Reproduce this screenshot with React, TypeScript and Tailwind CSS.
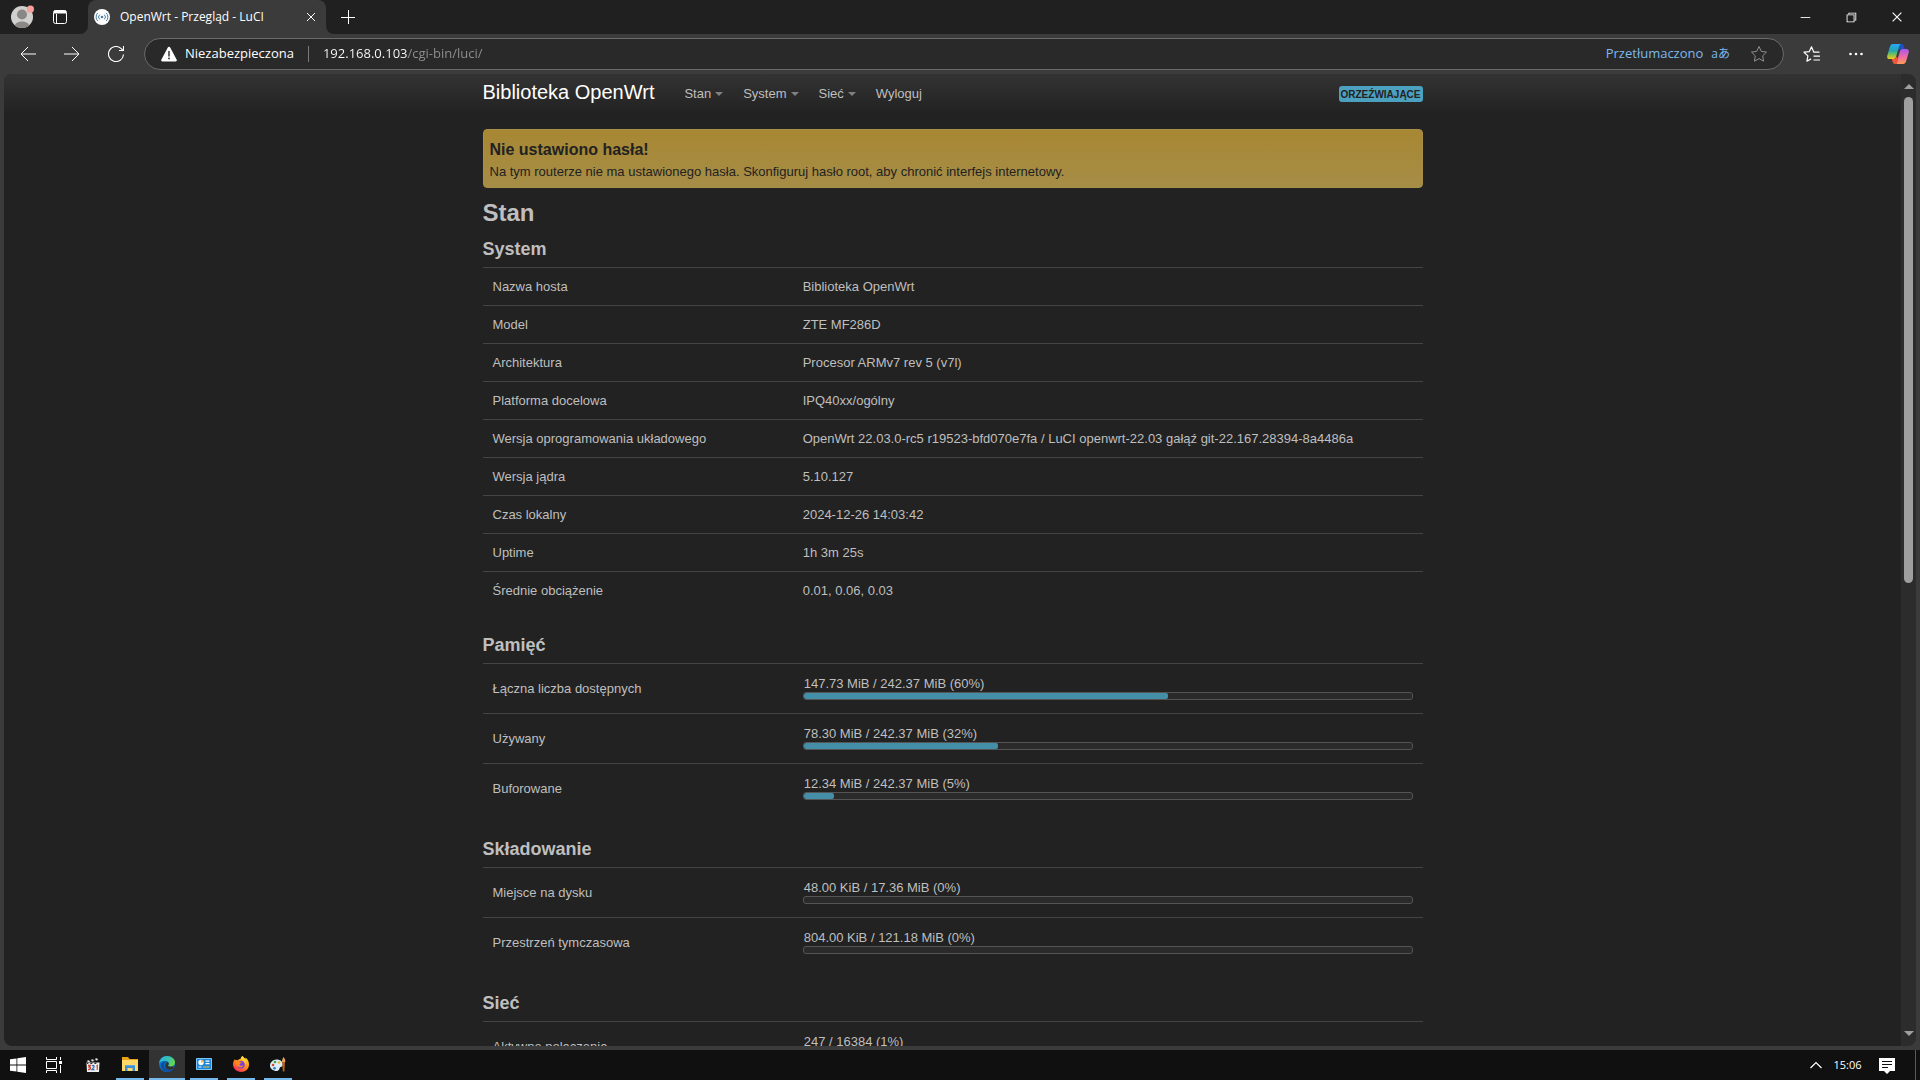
import { type ReactNode } from 'react';
import {
  VscChromeClose,
  VscChromeMinimize,
  VscChromeRestore,
} from 'react-icons/vsc';

type Row = { label: string; value: string };
type UsageRow = Row & { percent: number };

const systemRows: Row[] = [
  { label: 'Nazwa hosta', value: 'Biblioteka OpenWrt' },
  { label: 'Model', value: 'ZTE MF286D' },
  { label: 'Architektura', value: 'Procesor ARMv7 rev 5 (v7l)' },
  { label: 'Platforma docelowa', value: 'IPQ40xx/ogólny' },
  {
    label: 'Wersja oprogramowania układowego',
    value: 'OpenWrt 22.03.0-rc5 r19523-bfd070e7fa / LuCI openwrt-22.03 gałąź git-22.167.28394-8a4486a',
  },
  { label: 'Wersja jądra', value: '5.10.127' },
  { label: 'Czas lokalny', value: '2024-12-26 14:03:42' },
  { label: 'Uptime', value: '1h 3m 25s' },
  { label: 'Średnie obciążenie', value: '0.01, 0.06, 0.03' },
];

const memoryRows: UsageRow[] = [
  { label: 'Łączna liczba dostępnych', value: '147.73 MiB / 242.37 MiB (60%)', percent: 60 },
  { label: 'Używany', value: '78.30 MiB / 242.37 MiB (32%)', percent: 32 },
  { label: 'Buforowane', value: '12.34 MiB / 242.37 MiB (5%)', percent: 5 },
];

const storageRows: UsageRow[] = [
  { label: 'Miejsce na dysku', value: '48.00 KiB / 17.36 MiB (0%)', percent: 0 },
  { label: 'Przestrzeń tymczasowa', value: '804.00 KiB / 121.18 MiB (0%)', percent: 0 },
];

const networkRows: UsageRow[] = [
  { label: 'Aktywne połączenia', value: '247 / 16384 (1%)', percent: 1 },
];

const menu = [
  { label: 'Stan', dropdown: true },
  { label: 'System', dropdown: true },
  { label: 'Sieć', dropdown: true },
  { label: 'Wyloguj', dropdown: false },
];

/* ---------- Browser icons ---------- */

function AvatarIcon() {
  return (
    <svg className="h-6 w-6" viewBox="0 0 24 24">
      <clipPath id="avatar">
        <circle cx="12" cy="12" r="11" />
      </clipPath>
      <circle cx="12" cy="12" r="11" fill="#d2d0ce" />
      <g clipPath="url(#avatar)" fill="#8a8886">
        <circle cx="12" cy="9.500" r="5" />
        <path d="M4 24c0-5 3-7.500 8-7.500s8 2.500 8 7.500z" />
      </g>
      <circle cx="20.400" cy="4.200" r="3.600" fill="#f8a09a" />
    </svg>
  );
}

function WorkspaceIcon() {
  return (
    <svg className="h-4 w-4" viewBox="0 0 16 16" fill="none" stroke="#fff">
      <rect x="1.500" y="1.500" width="13" height="13" rx="2" />
      <path d="M2 3h12" strokeWidth="3" />
      <path d="M4.500 5v9" />
    </svg>
  );
}

function LuciFavicon() {
  return (
    <svg className="h-4 w-4" viewBox="0 0 16 16" fill="none" stroke="#4b7f9c">
      <circle cx="8" cy="8" r="8" fill="#fff" stroke="none" />
      <circle cx="8" cy="8" r="1.300" fill="#4b7f9c" stroke="none" />
      <path d="M5.700 5.600a3.300 3.300 0 0 0 0 4.800M10.300 5.600a3.300 3.300 0 0 1 0 4.800" />
      <path d="M3.800 3.900a5.800 5.800 0 0 0 0 8.200M12.200 3.900a5.800 5.800 0 0 1 0 8.200" />
    </svg>
  );
}

function BackIcon() {
  return (
    <svg className="h-4 w-4" viewBox="0 0 16 16" fill="none" stroke="currentColor">
      <path d="M16 8H1M8 1L1 8l7 7" />
    </svg>
  );
}

function ForwardIcon() {
  return (
    <svg className="h-4 w-4" viewBox="0 0 16 16" fill="none" stroke="currentColor">
      <path d="M0 8h15M8 1l7 7-7 7" />
    </svg>
  );
}

function ReloadIcon() {
  return (
    <svg className="h-4 w-4" viewBox="0 0 16 16" fill="none" stroke="currentColor" strokeWidth="1.100">
      <path d="M15.500 8.500A7.500 7.500 0 1 1 13.300 2.700L15 4.500" />
      <path d="M15.500 0v4.500H11" />
    </svg>
  );
}

function WarningIcon() {
  return (
    <svg className="h-4 w-4 shrink-0" viewBox="0 0 16 16">
      <path d="M8 .8c.5 0 .9.2 1.200.7l6.500 12.200c.5.900-.1 1.800-1.100 1.800H1.400c-1 0-1.600-.9-1.100-1.800L6.800 1.500C7.100 1 7.500.8 8 .8z" fill="#fff" />
      <path d="M8 5.500v4.500" stroke="#292929" strokeWidth="1.400" strokeLinecap="round" />
      <circle cx="8" cy="12.400" r=".9" fill="#292929" />
    </svg>
  );
}

function StarIcon() {
  return (
    <svg className="h-[18px] w-[18px]" viewBox="0 0 18 18" fill="none" stroke="#8e8e8e" strokeLinejoin="round">
      <path d="M9 1.500l2.300 4.900 5.200.7-3.800 3.700.9 5.400L9 13.600l-4.600 2.600.9-5.400L1.500 7.100l5.200-.7z" />
    </svg>
  );
}

function FavoritesIcon() {
  return (
    <svg className="h-[18px] w-[18px]" viewBox="0 0 18 18" fill="none" stroke="#fff" strokeLinejoin="round" strokeWidth="1.200">
      <path d="M16.500 7.200H10.800L8.500 1.800 6.300 6.600l-5.300.6 3.900 3.700-1 5.300 4.200-2.300" />
      <path d="M10.500 11.200H17M10.500 15H17" />
    </svg>
  );
}

function CopilotIcon() {
  return (
    <svg className="h-[22px] w-[22px]" viewBox="0 0 22 22">
      <defs>
        <linearGradient id="cop-left" x1="0" y1="0" x2="0" y2="1">
          <stop offset="0" stopColor="#2aa5f5" />
          <stop offset=".45" stopColor="#22a8b0" />
          <stop offset=".75" stopColor="#8bc34a" />
          <stop offset="1" stopColor="#f4c81e" />
        </linearGradient>
        <linearGradient id="cop-right" x1="0" y1="0" x2="0" y2="1">
          <stop offset="0" stopColor="#a259ee" />
          <stop offset=".5" stopColor="#ee6aa7" />
          <stop offset="1" stopColor="#ff9b55" />
        </linearGradient>
      </defs>
      <path d="M12 1h2.500c1.600 0 2 1 2.500 2.500l.8 2.500H14c-1.500 0-2.300.8-2.800 2.500z" fill="#1b50c8" />
      <path d="M5.800 1H14c-1.300.5-1.700 1.800-2.200 3.500L9 14c-.5 1.500-1.300 2-2.800 2H2.500C.5 16-.2 14.500.3 12.500L3 3.500C3.500 2 4.300 1 5.800 1z" fill="url(#cop-left)" />
      <path d="M16.200 21H8c1.300-.5 1.700-1.800 2.200-3.500L13 8c.5-1.500 1.300-2 2.800-2h3.700c2 0 2.700 1.500 2.200 3.500L19 18.500c-.5 1.500-1.300 2.500-2.800 2.500z" fill="url(#cop-right)" />
      <path d="M10 21H8c-1.600 0-2-1-2.500-2.500L4.700 16h2c1.500 0 2.300-.8 2.800-2.500l1.300 2z" fill="#f2553d" />
    </svg>
  );
}

/* ---------- Taskbar icons ---------- */

function WindowsIcon() {
  return (
    <svg className="h-4 w-4" viewBox="0 0 16 16" fill="#fff">
      <path d="M0 2.300l6.500-.9v6.200H0zM7.300 1.200L16 0v7.600H7.300zM0 8.400h6.500v6.200L0 13.700zM7.300 8.400H16V16l-8.700-1.200z" />
    </svg>
  );
}

function TaskViewIcon() {
  return (
    <svg className="h-4 w-4" viewBox="0 0 16 16" fill="none" stroke="#fff">
      <path d="M.5 0v2.500h10V0M.5 16v-2.500h10V16" />
      <path d="M.5 4.500h10v7H.5zM14.500 0v3M14.500 8v8" />
      <path d="M13 4h3v3h-3z" fill="#fff" stroke="none" />
    </svg>
  );
}

function ClapperIcon() {
  return (
    <svg className="h-4 w-4" viewBox="0 0 16 16">
      <path d="M1 4l12-3 .8 2.500-12 2.500z" fill="#222" />
      <path d="M2 3.800l2-.5 1 1.700-2 .5zM6 2.800l2-.5 1 1.700-2 .5zM10 1.800l2-.5 1 1.700-2 .5z" fill="#e8e8e8" />
      <path d="M1.500 5.500h13l-.5 9.500H2z" fill="#eee" />
      <path d="M2 5.500h2l-1 1.500H2zM6 5.500h2L7 7H5zM10 5.500h2L11 7H9z" fill="#333" />
      <path d="M3 8.500h2.300L4.200 10c2 0 1.500 3-1.200 2.500" fill="none" stroke="#c43d2b" strokeWidth="1.300" />
      <path d="M7 9c1.500-1.300 3 .2 1.500 1.700L7 12.700h2.500" fill="none" stroke="#2f6fc0" strokeWidth="1.300" />
      <path d="M11.300 9.200l1-.7v4.500" fill="none" stroke="#d3642a" strokeWidth="1.400" />
    </svg>
  );
}

function ExplorerIcon() {
  return (
    <svg className="h-4 w-4" viewBox="0 0 16 16">
      <path d="M0 1h6l1.500 2H16v12H0z" fill="#e8a317" />
      <path d="M0 4h16v11H0z" fill="#ffd968" />
      <path d="M3 9h10v6h-2.500v-3h-5v3H3z" fill="#3d8fd1" />
      <path d="M3 9h10v1H3z" fill="#5aa9e6" />
    </svg>
  );
}

function EdgeIcon() {
  return (
    <svg className="h-4 w-4" viewBox="0 0 16 16">
      <defs>
        <linearGradient id="edge-top" x1="0" y1="0" x2="1" y2=".4">
          <stop offset="0" stopColor="#2eb3e8" />
          <stop offset=".6" stopColor="#35c1b1" />
          <stop offset="1" stopColor="#66d64b" />
        </linearGradient>
      </defs>
      <circle cx="8" cy="8" r="8" fill="#1175c9" />
      <path d="M0 7.500C.5 3 4 0 8 0c4.600 0 8 3 8 6.500 0 2.700-2 4.200-4.500 4.200-1.500 0-2.500-.5-2.500-1.200 0-.6.800-.8.800-2C9.800 6 8.400 4.800 6 4.800c-3 0-5.300 1-6 2.700z" fill="url(#edge-top)" />
      <path d="M5.200 9.500c0-2 1.200-3.500 2.800-3.700C5.700 5 3.200 6 2 8c-1 3.500 1.500 7 5.500 7.800 2.800.3 5.300-.7 6.800-2.600-1 .5-2 .8-3.300.8-3.200 0-5.800-2-5.800-4.500z" fill="#0b4f9e" />
      <path d="M9.800 8c0 1-.8 1-.8 1.500 0 .7 1 1.200 2.500 1.200 1.300 0 2.500-.4 3.300-1.200l-.3 3c-1 1-2.300 1.300-3.500 1.300-3.200 0-5-2-4.800-4.300C6.500 7.500 8 6 8.500 6c.9.300 1.300 1 1.300 2z" fill="#333" />
    </svg>
  );
}

function ControlPanelIcon() {
  return (
    <svg className="h-4 w-4" viewBox="0 0 16 16">
      <rect y="2" width="16" height="12" rx=".8" fill="#7cc8f8" />
      <rect x="1" y="3" width="14" height="10" fill="#1b86d8" />
      <circle cx="5" cy="6.500" r="2.700" fill="#fff" />
      <path d="M5 6.500V3.800a2.700 2.700 0 0 1 2.700 2.700z" fill="#f6b73c" />
      <path d="M9.500 4.500h4v1.200h-4zM9.500 7h4v1.200h-4z" fill="#fff" />
      <path d="M2.500 11h3" stroke="#fff" />
      <path d="M7 11h6.500" stroke="#f6b73c" />
    </svg>
  );
}

function FirefoxIcon() {
  return (
    <svg className="h-4 w-4" viewBox="0 0 16 16">
      <defs>
        <linearGradient id="fox" x1=".8" y1="0" x2=".2" y2="1">
          <stop offset="0" stopColor="#ffe226" />
          <stop offset=".45" stopColor="#ff9518" />
          <stop offset=".8" stopColor="#ff4f3f" />
          <stop offset="1" stopColor="#e31587" />
        </linearGradient>
      </defs>
      <path d="M9.500 0c1 1.200 1.600 2 3 2.800.1-.5 0-.8 0-1.200C15 3.500 16 6 16 8.500 16 13 12.500 16 8 16S0 12.600 0 8.300c0-2 .8-3.900 2-5.300.1.500.2.900.6 1.300.8-.2 1.500-.2 2.200 0C5.500 3.500 6.500 3 7.500 3 7.500 2 8.500.8 9.500 0z" fill="url(#fox)" />
      <circle cx="8" cy="8.800" r="3.700" fill="#7a3fe0" />
      <path d="M2.600 4.300c1.700-.4 3.400.3 4.300 1.600.8 0 1.600.2 1.600.6-.1.800-1.700.9-2 1.500-.2.900.6 2.200 2.400 1.800.6-.1 1-.4 1.500-.2-.5 1.200-1.700 1.900-3.200 1.700C4.800 11 3 9 2.600 4.300z" fill="#ff8a1c" />
      <path d="M9.500 0c-1.300 1-1.800 2.200-1.600 3.200 2.600.4 4.300 2.600 4.300 5.200C13.500 6 12.500 3.500 9.500 0z" fill="#ffd83a" />
    </svg>
  );
}

function PaintIcon() {
  return (
    <svg className="h-4 w-4" viewBox="0 0 16 16">
      <path d="M6.500 3.500c4 0 6.300 2.300 6.300 5 0 2-1.300 2.300-2.300 2.600-1.500.4-.3 3.900-3.800 3.900C3 15 0 12.500 0 9.500s3-6 6.500-6z" fill="#d9eef7" />
      <circle cx="3" cy="9" r="1.300" fill="#d9452f" />
      <circle cx="5" cy="6" r="1.300" fill="#3fa648" />
      <circle cx="9" cy="6.500" r="1.300" fill="#f0b429" />
      <circle cx="4.500" cy="12.200" r="1.300" fill="#2f77d0" />
      <path d="M12.200 6h2.800l-.6 9.500h-1.600z" fill="#b5651d" />
      <path d="M12 6c-.2-2 .8-3 1.200-5 1.500 1 2.500 3 2 5z" fill="#e6a15a" />
    </svg>
  );
}

function NotificationIcon() {
  return (
    <svg className="h-4 w-4" viewBox="0 0 16 16">
      <path d="M0 0h16v13h-5l-3 3-3-3H0z" fill="#fff" />
      <path d="M3 3.500h10M3 6.500h10M3 9.500h6" stroke="#101010" />
    </svg>
  );
}

/* ---------- Browser chrome ---------- */

function IconButton({ label, className, children }: { label: string; className: string; children: ReactNode }) {
  return (
    <button type="button" aria-label={label} className={`flex shrink-0 items-center justify-center text-white ${className}`}>
      {children}
    </button>
  );
}

function TabStrip() {
  return (
    <div className="flex h-[34px] shrink-0 items-stretch bg-[#202020]">
      <IconButton label="Profil" className="w-11">
        <AvatarIcon />
      </IconButton>
      <IconButton label="Obszary robocze" className="w-8">
        <WorkspaceIcon />
      </IconButton>
      <div className="w-3 bg-[#3b3b3b]">
        <div className="h-full rounded-br-lg bg-[#202020]" />
      </div>
      <div className="flex w-[238px] items-center rounded-t-lg bg-[#3b3b3b] pl-1.5 pr-[7px]">
        <LuciFavicon />
        <span className="ml-2.5 flex-1 truncate text-xs text-white">OpenWrt - Przegląd - LuCI</span>
        <IconButton label="Zamknij kartę" className="h-4 w-4">
          <svg className="h-2 w-2" viewBox="0 0 8 8" stroke="#fff">
            <path d="M0 0l8 8M8 0L0 8" />
          </svg>
        </IconButton>
      </div>
      <div className="w-2 bg-[#3b3b3b]">
        <div className="h-full rounded-bl-lg bg-[#202020]" />
      </div>
      <IconButton label="Nowa karta" className="w-7">
        <svg className="h-[14px] w-[14px]" viewBox="0 0 14 14" stroke="#fff">
          <path d="M7.500 0v14M0 7.500h14" />
        </svg>
      </IconButton>
      <div className="ml-auto flex">
        <IconButton label="Minimalizuj" className="w-[46px]">
          <VscChromeMinimize className="h-3.5 w-3.5" />
        </IconButton>
        <IconButton label="Przywróć" className="w-[46px]">
          <VscChromeRestore className="h-3.5 w-3.5" />
        </IconButton>
        <IconButton label="Zamknij" className="w-[46px]">
          <VscChromeClose className="h-3.5 w-3.5" />
        </IconButton>
      </div>
    </div>
  );
}

function Toolbar() {
  return (
    <div className="flex h-10 shrink-0 items-center bg-[#3b3b3b] pl-1.5 pr-0.5">
      <IconButton label="Wstecz" className="w-11">
        <BackIcon />
      </IconButton>
      <IconButton label="Dalej" className="w-11">
        <ForwardIcon />
      </IconButton>
      <IconButton label="Odśwież" className="w-11">
        <ReloadIcon />
      </IconButton>
      <div className="ml-1.5 flex h-8 flex-1 items-center rounded-full border border-[#6a6a6a] bg-[#292929] pl-4 text-[13px]">
        <button type="button" className="flex items-center gap-2 text-white">
          <WarningIcon />
          Niezabezpieczona
        </button>
        <span className="mx-[14px] h-4 w-px bg-[#7a7a7a]" />
        <input
          type="text"
          aria-label="Adres"
          defaultValue="192.168.0.103/cgi-bin/luci/"
          className="min-w-0 flex-1 bg-linear-to-r from-white from-[85px] to-[#909090] to-[85px] bg-clip-text text-transparent outline-none"
        />
        <button type="button" className="flex items-center gap-2 text-[#7cb9ec]">
          Przetłumaczono
          <span className="font-['Open_Sans','Noto_Sans_CJK_JP',sans-serif] text-xs">aあ</span>
        </button>
        <IconButton label="Dodaj do ulubionych" className="ml-5 mr-[15px]">
          <StarIcon />
        </IconButton>
      </div>
      <IconButton label="Ulubione" className="ml-1.5 w-11">
        <FavoritesIcon />
      </IconButton>
      <IconButton label="Ustawienia i więcej" className="w-11">
        <svg className="h-3 w-[14px]" viewBox="0 0 14 12" fill="#fff">
          <circle cx="1.500" cy="6" r="1.300" />
          <circle cx="7" cy="6" r="1.300" />
          <circle cx="12.500" cy="6" r="1.300" />
        </svg>
      </IconButton>
      <IconButton label="Copilot" className="w-10">
        <CopilotIcon />
      </IconButton>
    </div>
  );
}

function Scrollbar() {
  return (
    <div className="flex w-[15px] shrink-0 flex-col items-center bg-[#2c2c2c] py-2.5">
      <div className="border-x-[5px] border-b-[5px] border-x-transparent border-b-[#9f9f9f]" />
      <div className="mt-2 w-[9px] flex-1">
        <div className="h-[52%] rounded-full bg-[#9f9f9f]" />
      </div>
      <div className="border-x-[5px] border-t-[5px] border-x-transparent border-t-[#9f9f9f]" />
    </div>
  );
}

/* ---------- LuCI page ---------- */

function PageHeader() {
  return (
    <header className="h-10 bg-linear-to-b from-[#333] to-[#222]">
      <div className="mx-auto flex h-10 max-w-[940px] items-center">
        <a href="#" className="mr-[30px] pb-1 text-xl leading-5 text-white">Biblioteka OpenWrt</a>
        <nav className="flex flex-1 gap-5">
          {menu.map((item) => (
            <a key={item.label} href="#" className="flex items-center gap-1 text-[#bfbfbf]">
              {item.label}
              {item.dropdown && <span className="border-x-4 border-t-4 border-x-transparent border-t-[#808080]" />}
            </a>
          ))}
        </nav>
        <button type="button" className="rounded-[3px] bg-[#4da1c0] px-0.5 pt-px text-[10px] leading-[15px] font-bold text-[#222] uppercase">
          Orzeźwiające
        </button>
      </div>
    </header>
  );
}

function InfoTable({ rows }: { rows: Row[] }) {
  return (
    <table className="w-full table-fixed border-separate border-spacing-0">
      <tbody>
        {rows.map((row) => (
          <tr key={row.label} className="h-[38px]">
            <th scope="row" className="w-[33%] border-t border-[#444] px-2.5 text-left font-normal">{row.label}</th>
            <td className="border-t border-[#444] px-2.5">{row.value}</td>
          </tr>
        ))}
      </tbody>
    </table>
  );
}

function UsageTable({ rows }: { rows: UsageRow[] }) {
  return (
    <table className="w-full table-fixed border-separate border-spacing-0">
      <tbody>
        {rows.map((row) => (
          <tr key={row.label} className="h-[50px]">
            <th scope="row" className="w-[33%] border-t border-[#444] px-2.5 text-left font-normal">{row.label}</th>
            <td className="border-t border-[#444] px-2.5 pt-3 align-top">
              <div className="px-px leading-4">{row.value}</div>
              <div className="h-2 overflow-hidden rounded-[3px] border border-[#555] bg-[#2a2a2a]">
                <div className="h-full rounded-[2px] bg-[#448ea8]" style={{ width: `${row.percent}%` }} />
              </div>
            </td>
          </tr>
        ))}
      </tbody>
    </table>
  );
}

function Section({ title, children }: { title: string; children: ReactNode }) {
  return (
    <section className="mb-[18px]">
      <h3 className="text-lg leading-9 font-bold">{title}</h3>
      {children}
    </section>
  );
}

function LuciPage() {
  return (
    <div className="min-w-0 flex-1 overflow-hidden bg-[#222] font-['Liberation_Sans',Arial,sans-serif] text-[13px] leading-[18px] text-[#bfbfbf]">
      <PageHeader />
      <main className="mx-auto max-w-[940px] pt-[15px]">
        <div className="rounded border border-[#a89048] bg-linear-to-b from-[#a78732] to-[#a68d46] px-1.5 pt-[7px] pb-1.5 text-[#222]">
          <h4 className="text-base leading-[26px] font-bold">Nie ustawiono hasła!</h4>
          <p>Na tym routerze nie ma ustawionego hasła. Skonfiguruj hasło root, aby chronić interfejs internetowy.</p>
        </div>
        <h2 className="mt-[7px] text-2xl leading-9 font-bold">Stan</h2>
        <Section title="System">
          <InfoTable rows={systemRows} />
        </Section>
        <Section title="Pamięć">
          <UsageTable rows={memoryRows} />
        </Section>
        <Section title="Składowanie">
          <UsageTable rows={storageRows} />
        </Section>
        <Section title="Sieć">
          <UsageTable rows={networkRows} />
        </Section>
      </main>
    </div>
  );
}

/* ---------- Taskbar ---------- */

const apps = [
  { name: 'Media Player Classic', icon: <ClapperIcon />, running: false, active: false },
  { name: 'Eksplorator plików', icon: <ExplorerIcon />, running: true, active: false },
  { name: 'Microsoft Edge', icon: <EdgeIcon />, running: true, active: true },
  { name: 'Panel sterowania', icon: <ControlPanelIcon />, running: true, active: false },
  { name: 'Firefox', icon: <FirefoxIcon />, running: true, active: false },
  { name: 'Paint', icon: <PaintIcon />, running: true, active: false },
];

function Taskbar() {
  return (
    <footer className="flex h-[30px] shrink-0 items-stretch bg-[#101010]">
      <IconButton label="Start" className="w-9">
        <WindowsIcon />
      </IconButton>
      <IconButton label="Widok zadań" className="w-9">
        <TaskViewIcon />
      </IconButton>
      <div className="ml-[3px] flex gap-px">
        {apps.map((app) => (
          <button
            key={app.name}
            type="button"
            aria-label={app.name}
            className={`flex w-9 flex-col items-center ${app.active ? 'bg-[#333]' : ''}`}
          >
            <span className="flex flex-1 items-center">{app.icon}</span>
            {app.running && <span className={`h-0.5 bg-[#76b9ed] ${app.active ? 'w-full' : 'w-7'}`} />}
          </button>
        ))}
      </div>
      <div className="ml-auto flex items-center">
        <IconButton label="Pokaż ukryte ikony" className="w-6">
          <svg className="h-2 w-3" viewBox="0 0 12 8" fill="none" stroke="#fff" strokeWidth="1.200">
            <path d="M.5 7L6 1.500 11.500 7" />
          </svg>
        </IconButton>
        <time className="w-[39px] text-center text-[11px] text-white">15:06</time>
        <IconButton label="Powiadomienia" className="w-10 pt-px">
          <NotificationIcon />
        </IconButton>
        <span className="ml-2 mr-1 h-full w-px bg-[#5a5a5a]" />
      </div>
    </footer>
  );
}

export default function App() {
  return (
    <div className="flex h-screen flex-col overflow-hidden bg-[#3b3b3b] font-['Open_Sans','Noto_Sans',sans-serif]">
      <TabStrip />
      <Toolbar />
      <div className="mx-1 mb-1 flex min-h-0 flex-1 overflow-hidden rounded-lg">
        <LuciPage />
        <Scrollbar />
      </div>
      <Taskbar />
    </div>
  );
}
